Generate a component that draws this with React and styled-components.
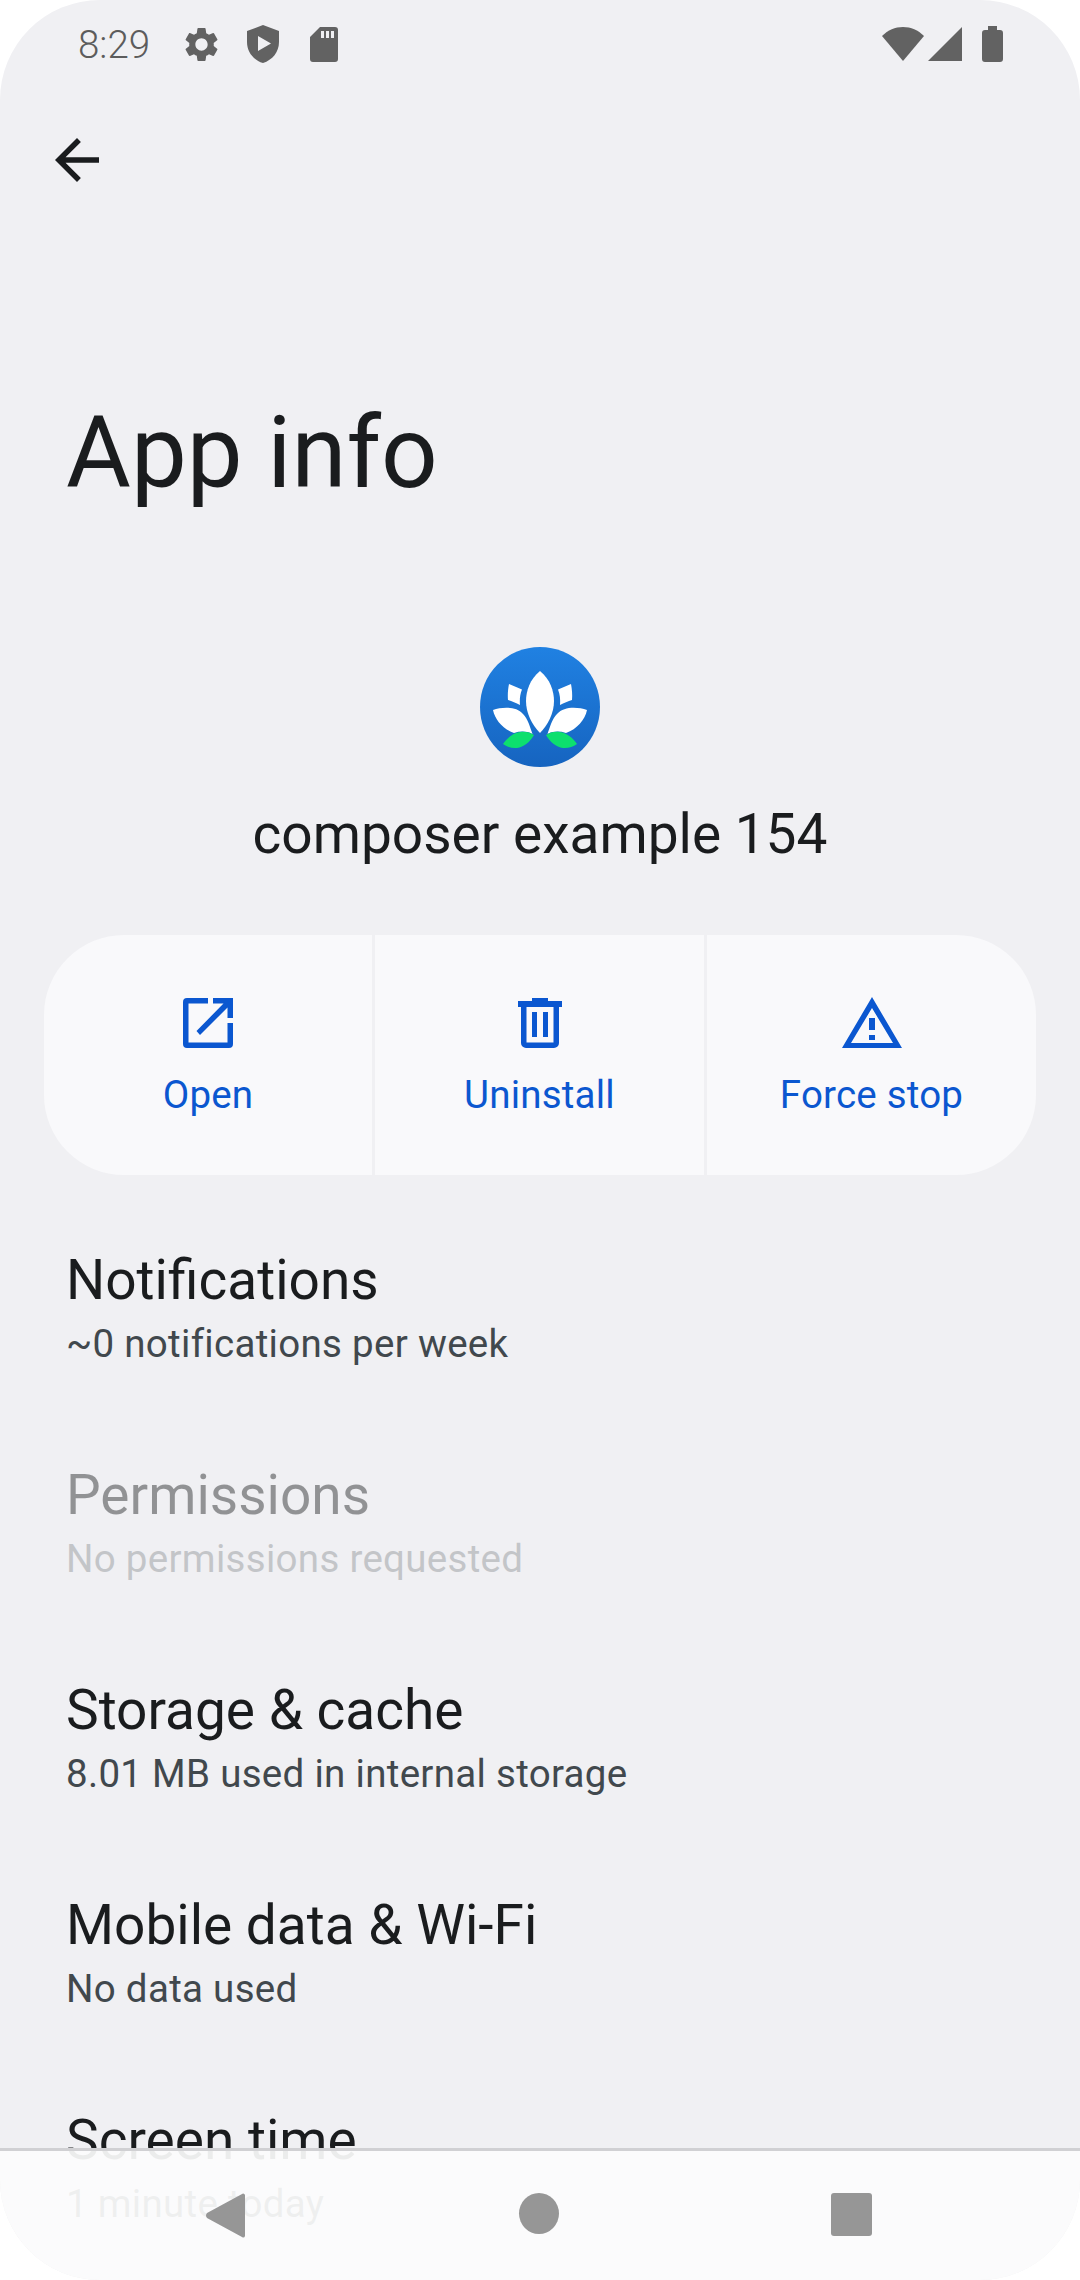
import React from 'react'
import styled, { createGlobalStyle } from 'styled-components'
import { MdArrowBack, MdSettings } from 'react-icons/md'

const GlobalStyle = createGlobalStyle`
    html, body {
        margin: 0;
        padding: 0;
        background: #ffffff;
        overflow: hidden;
    }
    * {
        box-sizing: border-box;
    }
`

const rows = [
    { title: 'Notifications', detail: '~0 notifications per week' },
    { title: 'Permissions', detail: 'No permissions requested', disabled: true },
    { title: 'Storage & cache', detail: '8.01 MB used in internal storage' },
    { title: 'Mobile data & Wi-Fi', detail: 'No data used' },
    { title: 'Screen time', detail: '1 minute today' },
]

const OpenIcon = () => (
    <svg width="50" height="50" viewBox="0 0 50 50" fill="currentColor">
        <path d="M25 0H4a4 4 0 0 0-4 4v42a4 4 0 0 0 4 4h42a4 4 0 0 0 4-4V25h-5.500v19.500h-39v-39H25z" />
        <path d="M30 0h20v20h-5.500V9.500L17 37l-3.500-4 27-27.500H30z" />
    </svg>
)

const TrashIcon = () => (
    <svg width="44" height="50" viewBox="0 0 44 50" fill="currentColor">
        <path
            d="M14 0h16v3h14v6h-3v36a5 5 0 0 1-5 5H8a5 5 0 0 1-5-5V9H0V3h14zM8.500 9v35.500h27V9z"
            fillRule="evenodd"
        />
        <path d="M14 14h5v25h-5zM25 14h5v25h-5z" />
    </svg>
)

const WarningIcon = () => (
    <svg width="60" height="51" viewBox="0 0 60 51" fill="currentColor">
        <path d="M30 0l30 51H0zM30 11L9 46h42z" fillRule="evenodd" />
        <path d="M27 21h6v12h-6zM27 38h6v5h-6z" />
    </svg>
)

const ShieldIcon = () => (
    <svg width="32" height="38" viewBox="0 0 32 38" fill="currentColor">
        <path
            d="M16 0L32 6v11c0 10-6.500 18-16 21C6.500 35 0 27 0 17V6zM11 11v15l13-7.500z"
            fillRule="evenodd"
        />
    </svg>
)

const SdIcon = () => (
    <svg width="28" height="35" viewBox="0 0 28 35" fill="currentColor">
        <path
            d="M10 0h15a3 3 0 0 1 3 3v29a3 3 0 0 1-3 3H3a3 3 0 0 1-3-3V10zM11 4v7h3V4zM16 4v7h3V4zM21 4v7h3V4z"
            fillRule="evenodd"
        />
    </svg>
)

const WifiIcon = () => (
    <svg width="42" height="34" viewBox="0 0 42 34" fill="currentColor">
        <path d="M21 34L0 9C6 3 13 0 21 0s15 3 21 9z" />
    </svg>
)

const SignalIcon = () => (
    <svg width="34" height="34" viewBox="0 0 34 34" fill="currentColor">
        <path d="M34 0v34H0z" />
    </svg>
)

const BatteryIcon = () => (
    <svg width="21" height="36" viewBox="0 0 21 36" fill="currentColor">
        <path d="M6 0h9v4h3a3 3 0 0 1 3 3v26a3 3 0 0 1-3 3H3a3 3 0 0 1-3-3V7a3 3 0 0 1 3-3h3z" />
    </svg>
)

const LotusIcon = () => (
    <svg width="120" height="120" viewBox="0 0 120 120">
        <defs>
            <linearGradient id="lotusBg" x1="0" y1="0" x2="0" y2="1">
                <stop offset="0" stopColor="#2081e2" />
                <stop offset="1" stopColor="#1664c0" />
            </linearGradient>
        </defs>
        <circle cx="60" cy="60" r="60" fill="url(#lotusBg)" />
        <g fill="#ffffff">
            <path d="M60 24C50 32 46 44 46 54c0 12 6 24 14 32 8-8 14-20 14-32 0-10-4-22-14-30z" />
            <path d="M29 37l13 5.500c-2 5-2.500 10-2 15.500-4-2-8-4-12-5-.5-5 0-11 1-16z" />
            <path d="M91 37l-13 5.500c2 5 2.500 10 2 15.500 4-2 8-4 12-5 .5-5 0-11-1-16z" />
            <path d="M13 63c9-3 23-4 30 4 5 5 7 13 9.500 20-6-3-12-3-18.500-1C23 82 15 73 13 63z" />
            <path d="M107 63c-9-3-23-4-30 4-5 5-7 13-9.500 20 6-3 12-3 18.500-1 11-4 19-13 21-23z" />
        </g>
        <g fill="#0ddf6e">
            <path d="M23 97c4-6 10-11 17-12 5-1 10 0 14 3-4 7-10 12-17 13-5 .5-10-1-14-4z" />
            <path d="M97 97c-4-6-10-11-17-12-5-1-10 0-14 3 4 7 10 12 17 13 5 .5 10-1 14-4z" />
        </g>
    </svg>
)

const App = () => {
    return (
        <>
            <GlobalStyle />
            <Screen>
                <StatusBar>
                    <StatusGroup>
                        <Clock>8:29</Clock>
                        <SettingsGlyph />
                        <ShieldIcon />
                        <SdIcon />
                    </StatusGroup>
                    <SignalGroup>
                        <WifiIcon />
                        <SignalIcon />
                        <BatteryIcon />
                    </SignalGroup>
                </StatusBar>
                <Toolbar>
                    <MdArrowBack size={66} />
                </Toolbar>
                <PageTitle>App info</PageTitle>
                <AppHeader>
                    <LotusIcon />
                    <AppName>composer example 154</AppName>
                </AppHeader>
                <ActionCard>
                    <Action>
                        <ActionIcon>
                            <OpenIcon />
                        </ActionIcon>
                        <ActionLabel>Open</ActionLabel>
                    </Action>
                    <Action>
                        <ActionIcon>
                            <TrashIcon />
                        </ActionIcon>
                        <ActionLabel>Uninstall</ActionLabel>
                    </Action>
                    <Action>
                        <ActionIcon>
                            <WarningIcon />
                        </ActionIcon>
                        <ActionLabel>Force stop</ActionLabel>
                    </Action>
                </ActionCard>
                <RowList>
                    {rows.map((row) => (
                        <Row key={row.title}>
                            <RowTitle $disabled={row.disabled}>{row.title}</RowTitle>
                            <RowDetail $disabled={row.disabled}>{row.detail}</RowDetail>
                        </Row>
                    ))}
                </RowList>
                <NavBar>
                    <BackKey viewBox="0 0 39 45" width="39" height="45">
                        <path d="M37 0.500a2 2 0 0 1 2 1.500v41a2 2 0 0 1-3 1L1 25a4 4 0 0 1 0-5z" />
                    </BackKey>
                    <HomeKey />
                    <RecentKey />
                </NavBar>
            </Screen>
        </>
    )
}

const Screen = styled.div`
    position: relative;
    width: 1080px;
    height: 2280px;
    overflow: hidden;
    border-radius: 100px;
    background: #f0f0f3;
    font-family: Roboto, 'Liberation Sans', sans-serif;
    color: #1a1c1e;
`

const StatusBar = styled.div`
    display: flex;
    align-items: center;
    justify-content: space-between;
    height: 88px;
    padding: 0 77px 0 78px;
    color: #626262;
`

const StatusGroup = styled.div`
    display: flex;
    align-items: center;
    gap: 29px;
    svg:last-child {
        margin-left: 2px;
    }
`

const Clock = styled.span`
    font-size: 38.5px;
    font-weight: 300;
    color: #5c5c5c;
    margin-right: 5.5px;
`

const SettingsGlyph = styled(MdSettings)`
    width: 41px;
    height: 41px;
    margin: 0 -4px;
`

const SignalGroup = styled.div`
    display: flex;
    align-items: center;
    gap: 4px;
    svg:last-child {
        margin-left: 16px;
    }
`

const Toolbar = styled.div`
    height: 105px;
    padding: 39px 0 0 44px;
`

const PageTitle = styled.h1`
    margin: 0;
    padding: 202px 0 0 66px;
    font-size: 99.5px;
    font-weight: 400;
    line-height: 116px;
`

const AppHeader = styled.div`
    display: flex;
    flex-direction: column;
    align-items: center;
    padding-top: 136px;
`

const AppName = styled.div`
    margin-top: 35px;
    font-size: 55px;
    line-height: 64px;
`

const ActionCard = styled.div`
    display: grid;
    grid-template-columns: 328px 329px 329px;
    column-gap: 3px;
    width: 992px;
    height: 240px;
    margin: 69px 0 0 44px;
    border-radius: 80px;
    overflow: hidden;
`

const Action = styled.div`
    display: flex;
    flex-direction: column;
    align-items: center;
    padding-top: 60px;
    background: #f9f9fb;
    color: #0b57d0;
`

const ActionIcon = styled.div`
    display: flex;
    align-items: flex-end;
    justify-content: center;
    height: 53px;
`

const ActionLabel = styled.div`
    margin-top: 24px;
    font-size: 38.5px;
    line-height: 45px;
    letter-spacing: 0.2px;
`

const RowList = styled.div`
    display: flex;
    flex-direction: column;
    padding-top: 73px;
`

const Row = styled.div`
    height: 215px;
    padding-left: 66px;
`

const RowTitle = styled.div`
    font-size: 55px;
    line-height: 65px;
    opacity: ${(props) => (props.$disabled ? 0.44 : 1)};
`

const RowDetail = styled.div`
    margin-top: 8px;
    font-size: 38.5px;
    line-height: 45px;
    letter-spacing: 0.3px;
    color: #41484d;
    opacity: ${(props) => (props.$disabled ? 0.25 : 1)};
`

const NavBar = styled.div`
    position: absolute;
    left: 0;
    right: 0;
    bottom: 0;
    display: flex;
    justify-content: center;
    align-items: flex-start;
    gap: 272px;
    height: 132px;
    padding-top: 42px;
    border-top: 3px solid #d0d0d3;
    background: rgba(252, 252, 252, 0.93);
`

const BackKey = styled.svg`
    fill: #969696;
    margin: 0 2px 0 -2px;
`

const HomeKey = styled.div`
    width: 40px;
    height: 41px;
    border-radius: 50%;
    background: #969696;
`

const RecentKey = styled.div`
    width: 41px;
    height: 43px;
    border-radius: 3px;
    background: #969696;
`

export default App
